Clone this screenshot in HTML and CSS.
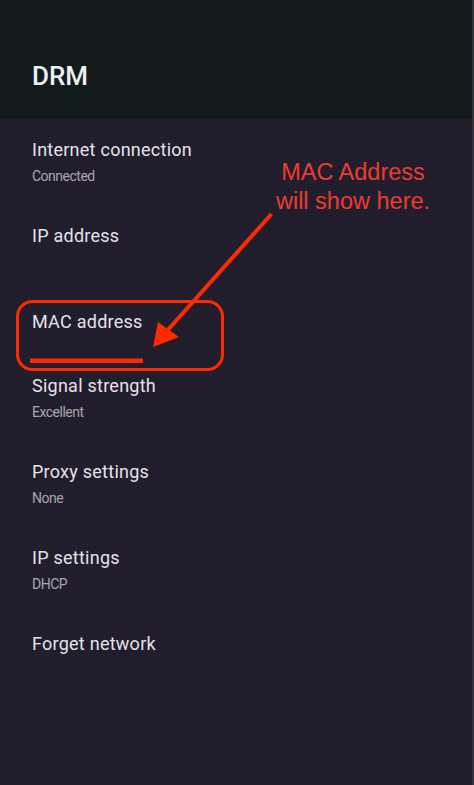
FILE: index.html
```html
<!DOCTYPE html>
<html>
<head>
<meta charset="utf-8">
<link rel="stylesheet" href="styles.css">
</head>
<body>
<div class="screen">
  <header class="appbar"><h1 class="title">DRM</h1></header>
  <ul class="list">
    <li class="item"><div class="primary">Internet connection</div><div class="secondary">Connected</div></li>
    <li class="item"><div class="primary">IP address</div><div class="secondary"></div></li>
    <li class="item"><div class="primary">MAC address</div></li>
    <li class="item"><div class="primary">Signal strength</div><div class="secondary">Excellent</div></li>
    <li class="item"><div class="primary">Proxy settings</div><div class="secondary">None</div></li>
    <li class="item"><div class="primary">IP settings</div><div class="secondary">DHCP</div></li>
    <li class="item"><div class="primary">Forget network</div></li>
  </ul>
  <div class="note">MAC Address<br>will show here.</div>
  <svg class="markup" width="474" height="785" viewBox="0 0 474 785">
    <rect x="17.5" y="301.5" width="205" height="68" rx="15" ry="15" fill="none" stroke="#ff2a00" stroke-width="3"/>
    <rect x="30" y="358.5" width="113" height="4.5" fill="#ff2a00"/>
    <line x1="271.5" y1="214" x2="166" y2="332" stroke="#ff2a00" stroke-width="4"/>
    <polygon points="153,347 158,322 179,337" fill="#ff2a00"/>
  </svg>
</div>
</body>
</html>
```
FILE: styles.css
```css
html, body {
  margin: 0;
  padding: 0;
}
body {
  background: #211d2c;
  font-family: Roboto, "Noto Sans", sans-serif;
}
.screen {
  position: relative;
  width: 474px;
  height: 785px;
  overflow: hidden;
  background: #211d2c;
  box-sizing: border-box;
  border-right: 2px solid #36323e;
}
.appbar {
  height: 117px;
  background: #121b1b;
  border-bottom: 1px solid #0c1212;
  display: flex;
  align-items: flex-end;
  box-sizing: content-box;
}
.title {
  margin: 0 0 26px 32px;
  font-size: 26px;
  line-height: 30px;
  font-weight: 500;
  color: #eef0f0;
}
.list {
  list-style: none;
  margin: 0;
  padding: 0;
}
.item {
  padding: 19px 32px 19px 32px;
  display: flex;
  flex-direction: column;
  gap: 4px;
}
.primary {
  font-size: 18px;
  line-height: 26px;
  letter-spacing: 0.25px;
  color: #e4e3e8;
}
.secondary {
  font-size: 14px;
  line-height: 18px;
  height: 18px;
  color: #a8a6ae;
  letter-spacing: -0.5px;
}
.note {
  position: absolute;
  left: 253px;
  top: 158px;
  width: 200px;
  text-align: center;
  font-family: "Liberation Sans", Arial, sans-serif;
  font-size: 23.5px;
  line-height: 29px;
  color: #ec3b30;
}
.markup {
  position: absolute;
  left: 0;
  top: 0;
}
```
